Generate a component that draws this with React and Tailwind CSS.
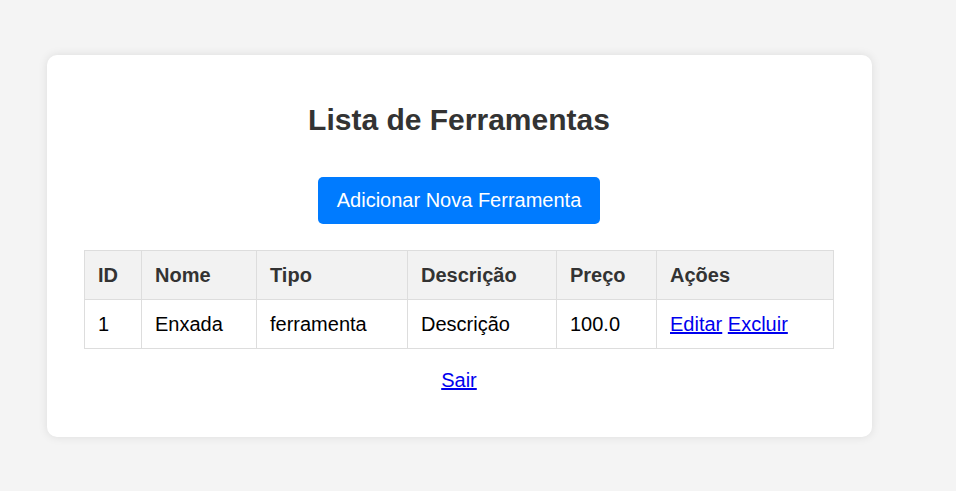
export default function App() {
  const cols = [
    { h: "ID", v: "1", w: "w-[57px]" },
    { h: "Nome", v: "Enxada", w: "w-[115px]" },
    { h: "Tipo", v: "ferramenta", w: "w-[151px]" },
    { h: "Descrição", v: "Descrição", w: "w-[149px]" },
    { h: "Preço", v: "100.0", w: "w-[100px]" },
  ];
  return (
    <div className="min-h-[491px] w-full bg-[#f4f4f4] pt-[55px] pb-[54px] font-['Liberation_Sans',Arial,sans-serif]">
      <div className="ml-[47px] w-[825px] rounded-[10px] bg-white pl-[37px] pr-[38px] pt-[48px] pb-[45px] shadow-[0_0_10px_rgba(0,0,0,0.1)]">
        <h2 className="text-center text-[30px] font-bold leading-[34px] text-[#333]">Lista de Ferramentas</h2>
        <div className="mt-[40px] flex justify-center">
          <a className="flex h-[47px] w-[282px] items-center justify-center rounded-[5px] bg-[#007bff] text-[20px] leading-[23px] text-white">
            Adicionar Nova Ferramenta
          </a>
        </div>
        <table className="mt-[26px] w-[750px] table-fixed border-collapse text-[20px] leading-[24px]">
          <thead>
            <tr className="bg-[#f2f2f2]">
              {cols.map((c) => (
                <th key={c.h} className={`${c.w} border border-[#ddd] px-[13px] py-[12px] text-left font-bold text-[#333]`}>
                  {c.h}
                </th>
              ))}
              <th className="border border-[#ddd] px-[13px] py-[12px] text-left font-bold text-[#333]">Ações</th>
            </tr>
          </thead>
          <tbody>
            <tr>
              {cols.map((c) => (
                <td key={c.h} className="border border-[#ddd] px-[13px] py-[12px] text-black">
                  {c.v}
                </td>
              ))}
              <td className="border border-[#ddd] px-[13px] py-[12px]">
                <a href="#" className="text-[#0000ee] underline">Editar</a>{" "}
                <a href="#" className="text-[#0000ee] underline">Excluir</a>
              </td>
            </tr>
          </tbody>
        </table>
        <div className="mt-[20px] text-center text-[20px] leading-[23px]">
          <a href="#" className="text-[#0000ee] underline">Sair</a>
        </div>
      </div>
    </div>
  );
}
